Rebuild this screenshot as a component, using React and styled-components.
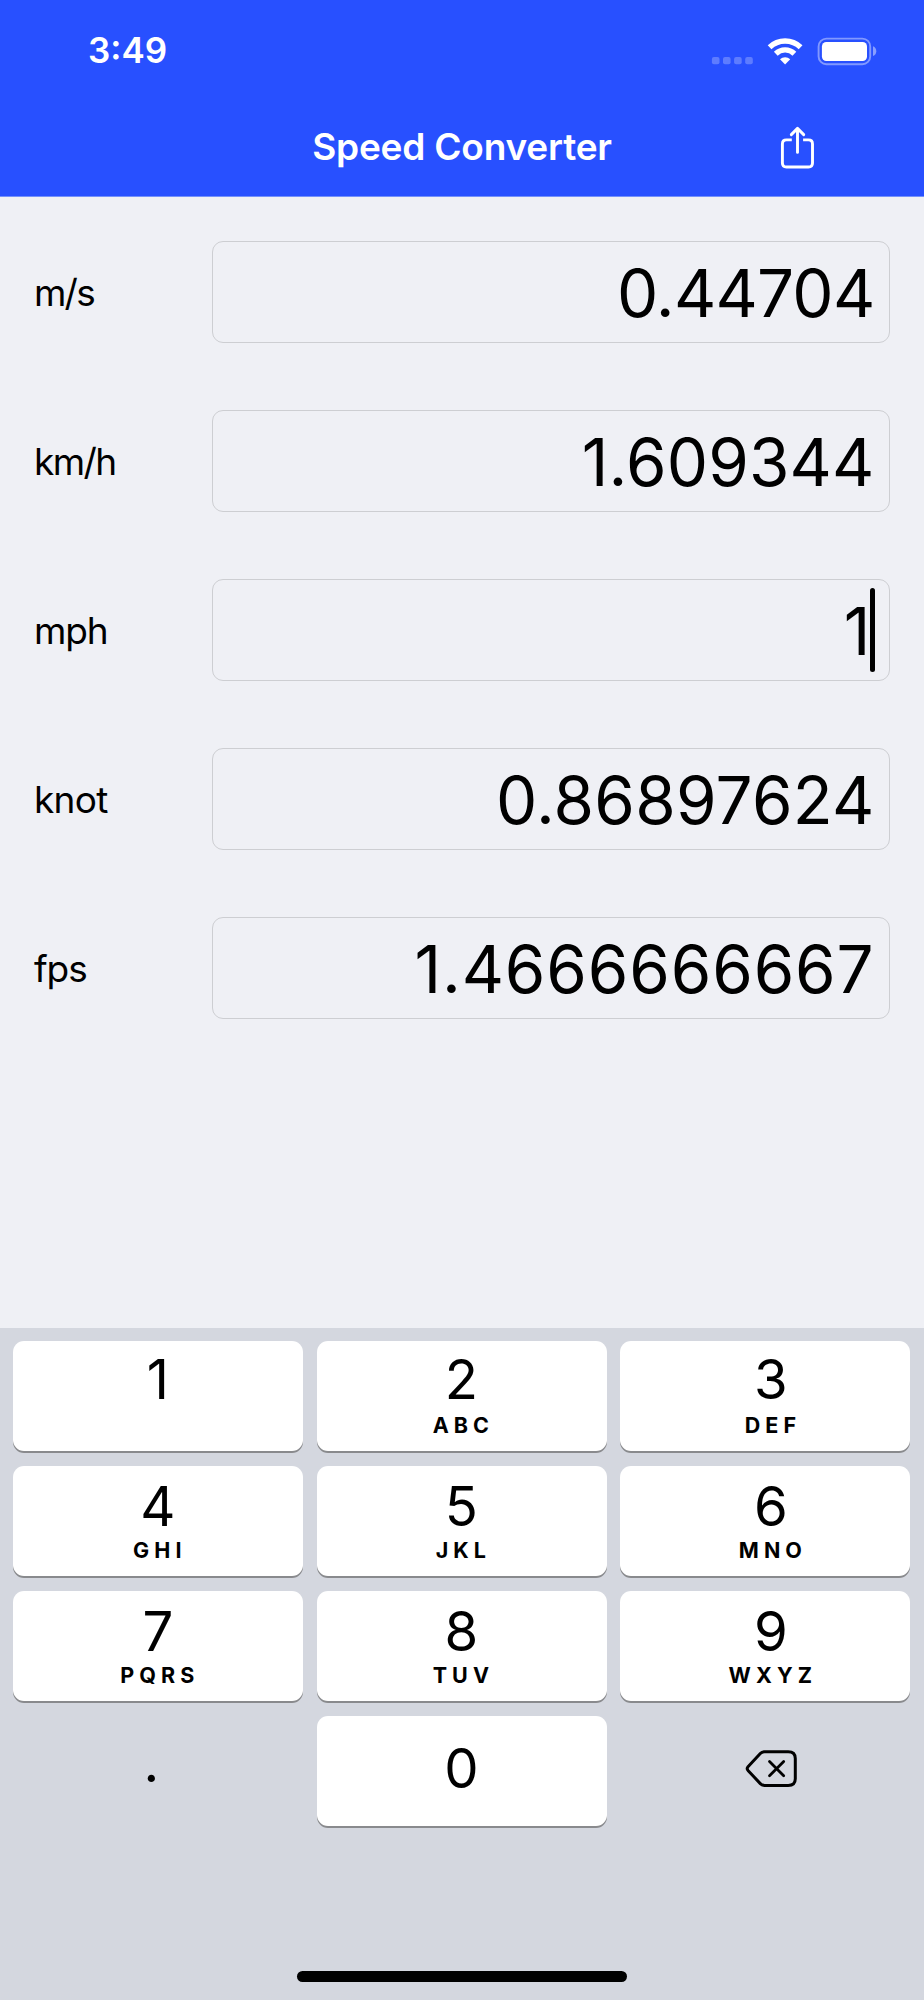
import React from "react";
import styled, { createGlobalStyle } from "styled-components";

const GlobalStyle = createGlobalStyle`
  * { box-sizing: border-box; }
  body { margin: 0; background: #eff0f5; }
`;

const Screen = styled.div`
  width: 924px;
  height: 2000px;
  display: flex;
  flex-direction: column;
  background: #eff0f5;
  color: #000;
  font-family: Inter, "Liberation Sans", sans-serif;
  overflow: hidden;
`;

const Header = styled.header`
  height: 197px;
  flex: none;
  background: #2850ff;
  border-bottom: 1px solid #7390fb;
  color: #fff;
`;

const StatusBar = styled.div`
  height: 101px;
  display: flex;
  align-items: center;
  padding: 0 47px 0 88px;
`;

const Clock = styled.time`
  flex: 1;
  padding-bottom: 1px;
  font-size: 35px;
  font-weight: 600;
  line-height: 40px;
`;

const StatusIcons = styled.svg`
  width: 170px;
  height: 40px;
  display: block;
`;

const NavBar = styled.div`
  height: 95px;
  display: grid;
  grid-template-columns: 1fr auto 1fr;
  align-items: center;
  padding-bottom: 2px;
`;

const Title = styled.h1`
  grid-column: 2;
  margin: 0;
  padding-bottom: 1px;
  font-size: 37px;
  font-weight: 600;
  line-height: 44px;
  letter-spacing: -0.2px;
  white-space: nowrap;
`;

const ShareButton = styled.button`
  justify-self: end;
  margin-right: 109px;
  padding: 0;
  border: 0;
  background: none;
  color: inherit;
  svg { display: block; }
`;

const Form = styled.main`
  flex: 1;
  padding: 44px 34px 0 34px;
  display: flex;
  flex-direction: column;
  gap: 67px;
`;

const Row = styled.label`
  height: 102px;
  display: flex;
  align-items: center;
`;

const Unit = styled.span`
  width: 178px;
  padding-top: 1px;
  font-size: 37px;
  letter-spacing: ${(p) => p.$tracking}px;
  line-height: 44px;
`;

const Field = styled.span`
  flex: 1;
  height: 102px;
  display: flex;
  align-items: center;
  justify-content: flex-end;
  border: 1px solid #cdced2;
  border-radius: 11px;
  padding-right: 14.5px;
`;

const Value = styled.span`
  padding-top: 3px;
  font-size: 65.5px;
  line-height: 80px;
  letter-spacing: ${(p) => p.$tracking}px;
`;

const Caret = styled.span`
  width: 5px;
  height: 84px;
  margin-left: -0.5px;
  margin-right: -0.5px;
  border-radius: 2.5px;
  background: #000;
`;

const Keyboard = styled.section`
  height: 672px;
  flex: none;
  display: flex;
  flex-direction: column;
  align-items: center;
  background: #d4d7df;
  padding: 13px 13.6px 0 13.4px;
`;

const Keys = styled.div`
  width: 100%;
  display: grid;
  grid-template-columns: repeat(3, 1fr);
  grid-auto-rows: 110px;
  column-gap: 13.5px;
  row-gap: 15px;
`;

const Key = styled.button`
  border: 0;
  margin: 0;
  font-family: inherit;
  color: #000;
  border-radius: 11px;
  background: ${(p) => (p.$plain ? "none" : "#fff")};
  box-shadow: ${(p) => (p.$plain ? "none" : "0 2px 0 #898a8d")};
  display: flex;
  flex-direction: column;
  align-items: center;
  padding: ${(p) => p.$top || "8px"} ${(p) => p.$right || "1px"} 0 ${(p) => p.$left || "0px"};
`;

const Digit = styled.span`
  height: ${(p) => (p.$tall ? 66 : 64)}px;
  font-size: 54.5px;
  line-height: 64px;
`;

const Letters = styled.span`
  height: 24px;
  font-size: 21.5px;
  font-weight: 700;
  line-height: 24px;
  letter-spacing: 5.1px;
  margin-right: -4px;
`;

const HomeIndicator = styled.div`
  width: 330px;
  height: 11px;
  margin-top: 145px;
  border-radius: 6px;
  background: #000;
`;

const units = [
  { name: "m/s", nameTracking: -1.8, value: "0.44704", valueTracking: -0.75 },
  { name: "km/h", nameTracking: -1.6, value: "1.609344", valueTracking: 0.15 },
  { name: "mph", nameTracking: -1.1, value: "1", valueTracking: 0, active: true },
  { name: "knot", nameTracking: -0.7, value: "0.86897624", valueTracking: 0.25 },
  { name: "fps", nameTracking: -1.1, value: "1.4666666667", valueTracking: 0.85 },
];

const keys = [
  ["1", ""], ["2", "ABC"], ["3", "DEF"],
  ["4", "GHI"], ["5", "JKL"], ["6", "MNO"],
  ["7", "PQRS"], ["8", "TUV"], ["9", "WXYZ"],
];

const Status = () => (
  <StatusIcons viewBox="707 30 170 40" fill="#fff">
    <g fillOpacity=".25">
      <rect x="711.9" y="56" width="7.6" height="7.3" rx="2" />
      <rect x="723" y="56" width="7.6" height="7.3" rx="2" />
      <rect x="734.1" y="56" width="7.6" height="7.3" rx="2" />
      <rect x="745.2" y="56" width="7.6" height="7.3" rx="2" />
    </g>
    <g fill="none" stroke="#fff" strokeWidth="5.4">
      <path d="M769.6 46.2A22.3 22.3 0 0 1 800.6 46.2" />
      <path d="M775.8 52.7A13.3 13.3 0 0 1 794.4 52.7" />
    </g>
    <path d="M785.1 63.5L780 58.2A7.6 7.6 0 0 1 790.2 58.2Z" />
    <rect x="818.6" y="37.6" width="51.6" height="25.6" rx="7.8" fill="none" stroke="#fff" strokeOpacity=".42" strokeWidth="1.9" />
    <rect x="821.9" y="41" width="45.1" height="19" rx="4.4" />
    <path d="M873 45.3Q876.3 46.8 876.3 50.2T873 55.1Z" fillOpacity=".45" />
  </StatusIcons>
);

const ShareIcon = () => (
  <svg width="36" height="46" viewBox="0 0 36 46" fill="none" stroke="#fff" strokeWidth="2.9" strokeLinecap="round" strokeLinejoin="round">
    <path d="M12.8 14.9H7.4Q3.4 14.9 3.4 18.9V38Q3.4 42 7.4 42H29.5Q33.5 42 33.5 38V18.9Q33.5 14.9 29.5 14.9H24.1" strokeLinecap="butt" />
    <path d="M18.5 27.4V3.5M12.3 9.6L18.5 3.4L24.7 9.6" />
  </svg>
);

const DeleteIcon = () => (
  <svg width="52" height="38" viewBox="0 0 52 38" fill="none" stroke="#000" strokeWidth="3" strokeLinecap="round" strokeLinejoin="round">
    <path d="M19.5 1.7H43.2Q50.3 1.7 50.3 8.4V28.7Q50.3 35.4 43.2 35.4H19.5Q17 35.4 15.3 33.6L3 20.4Q1.4 18.5 3 16.7L15.3 3.5Q17 1.7 19.5 1.7Z" />
    <path d="M24.5 11.5L38.7 25.7M38.7 11.5L24.5 25.7" strokeWidth="2.8" />
  </svg>
);

export default function App() {
  return (
    <Screen>
      <GlobalStyle />
      <Header>
        <StatusBar>
          <Clock>3:49</Clock>
          <Status />
        </StatusBar>
        <NavBar>
          <Title>Speed Converter</Title>
          <ShareButton aria-label="Share"><ShareIcon /></ShareButton>
        </NavBar>
      </Header>
      <Form>
        {units.map((u) => (
          <Row key={u.name}>
            <Unit $tracking={u.nameTracking}>{u.name}</Unit>
            <Field>
              <Value $tracking={u.valueTracking}>{u.value}</Value>
              {u.active && <Caret />}
            </Field>
          </Row>
        ))}
      </Form>
      <Keyboard>
        <Keys>
          {keys.map(([digit, letters], i) => (
            <Key key={digit} $top={i < 3 ? "6px" : "8px"} $left={i % 3 === 2 ? "12px" : "0px"}>
              <Digit $tall={i < 3}>{digit}</Digit>
              <Letters>{letters}</Letters>
            </Key>
          ))}
          <Key $plain $top="14px" $right="14px"><Digit>.</Digit></Key>
          <Key $top="20px"><Digit>0</Digit></Key>
          <Key $plain $top="34px" $left="12px" aria-label="Delete"><DeleteIcon /></Key>
        </Keys>
        <HomeIndicator />
      </Keyboard>
    </Screen>
  );
}
